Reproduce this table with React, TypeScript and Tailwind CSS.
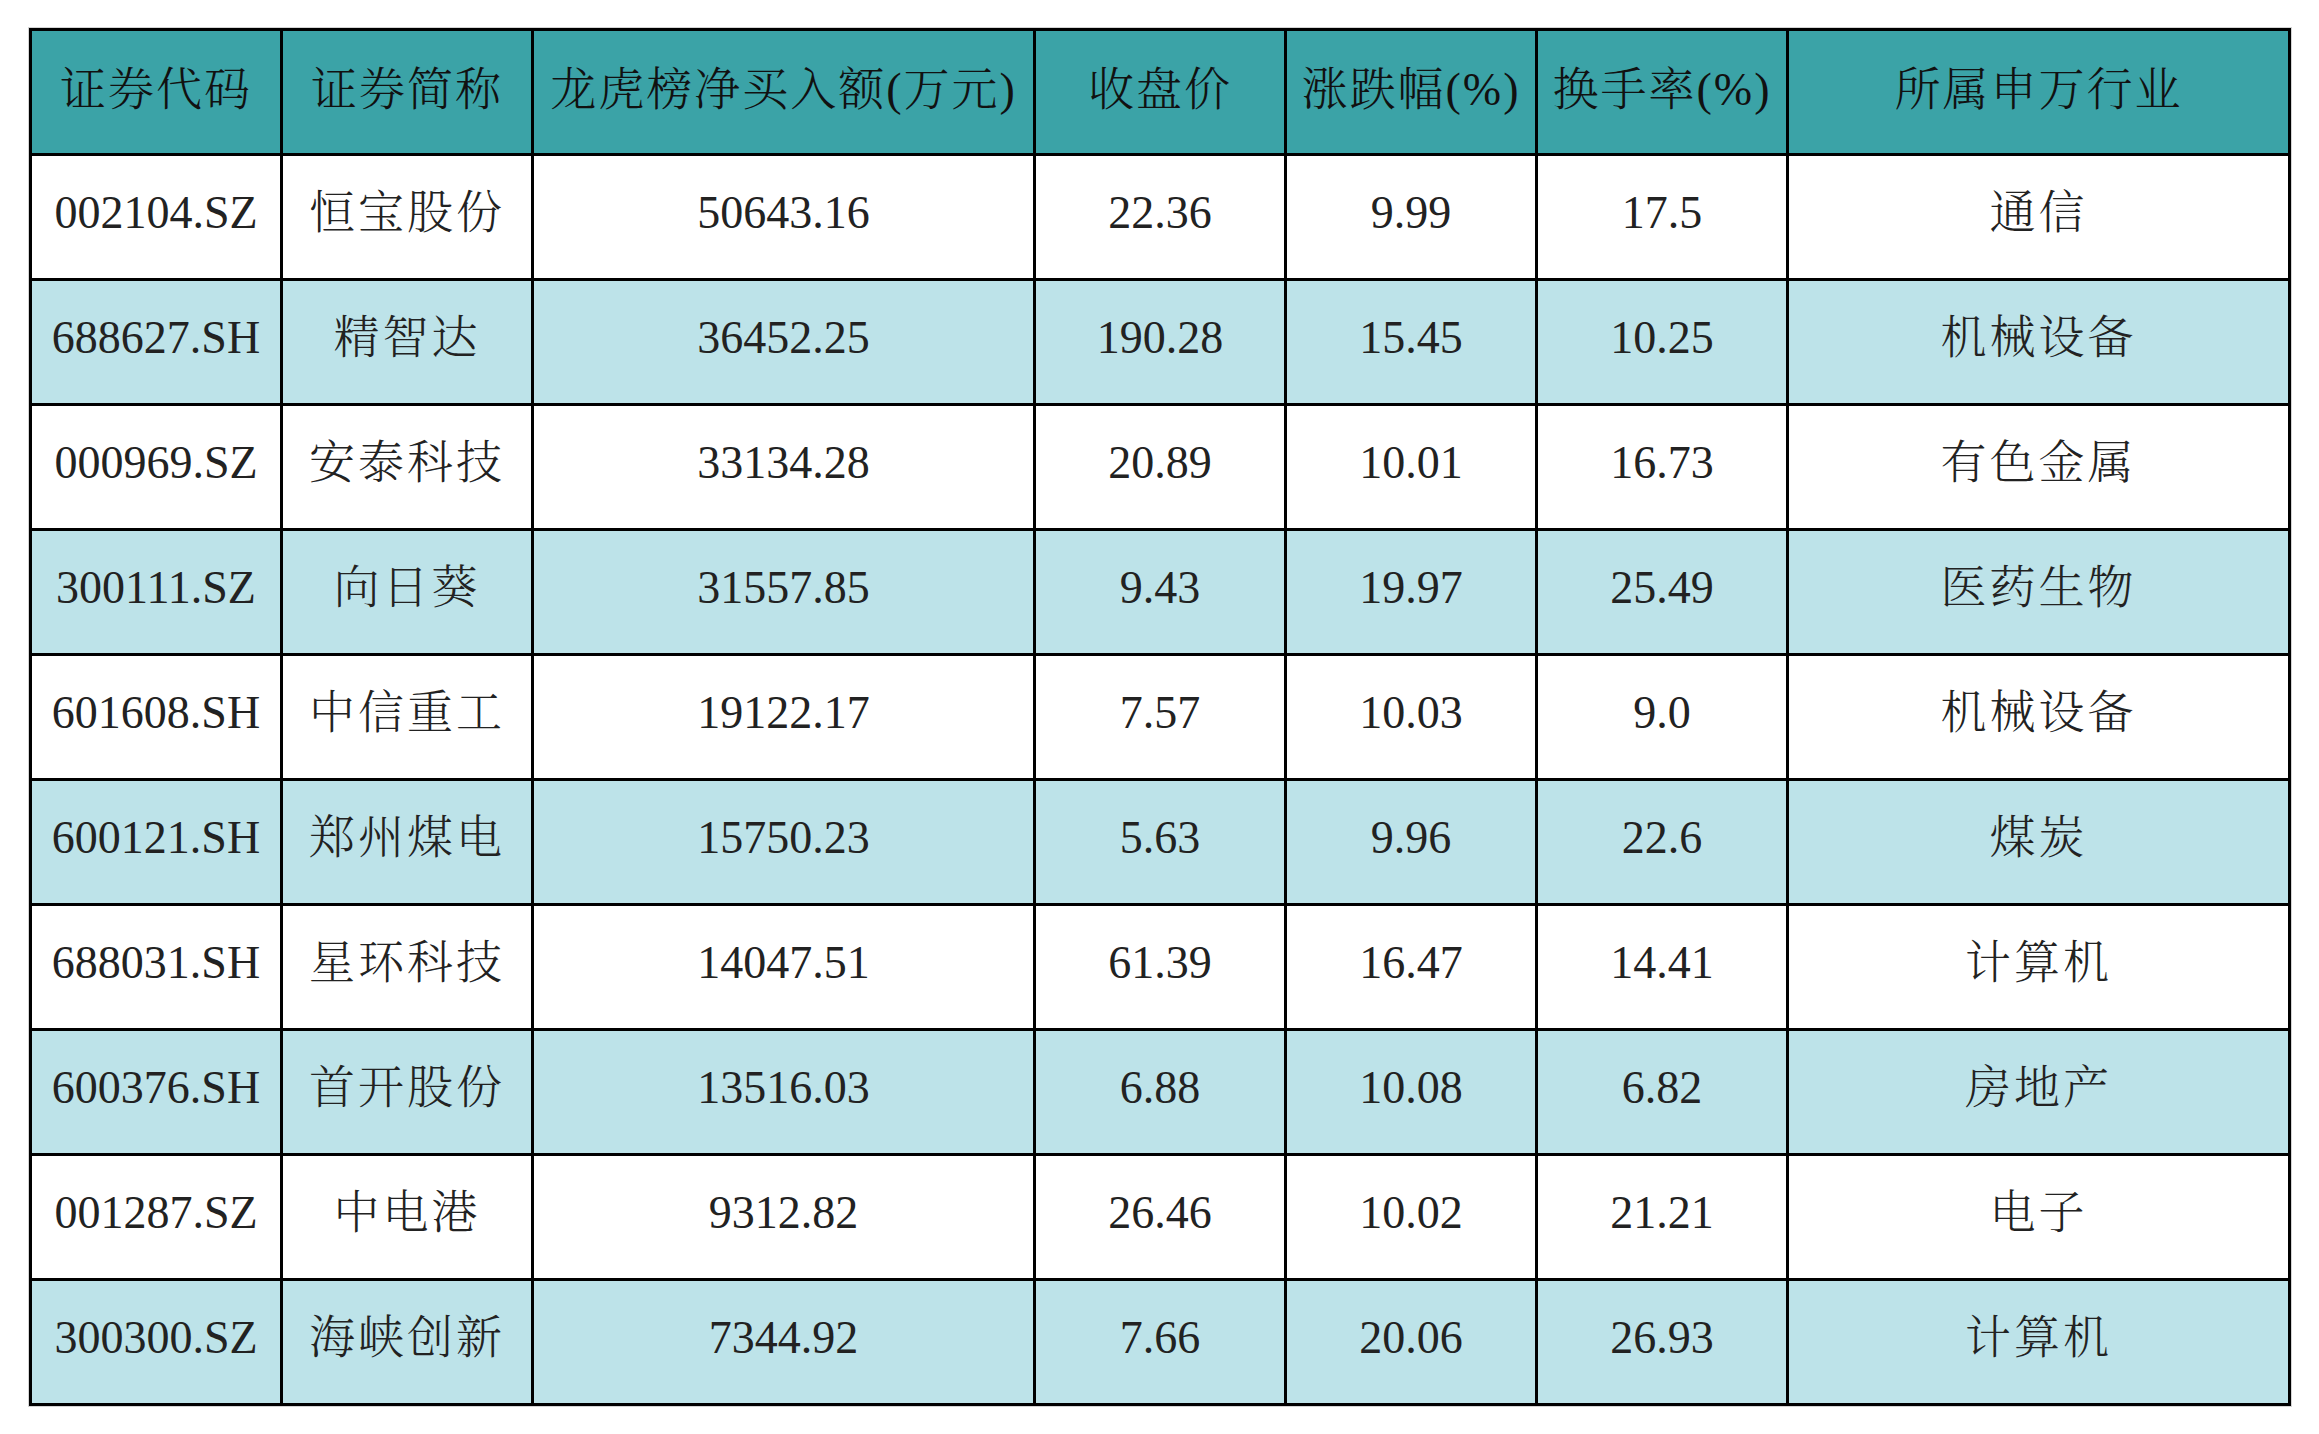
import React from "react";

const headers = ["证券代码", "证券简称", "龙虎榜净买入额(万元)", "收盘价", "涨跌幅(%)", "换手率(%)", "所属申万行业"];

const rows: string[][] = [
  ["002104.SZ", "恒宝股份", "50643.16", "22.36", "9.99", "17.5", "通信"],
  ["688627.SH", "精智达", "36452.25", "190.28", "15.45", "10.25", "机械设备"],
  ["000969.SZ", "安泰科技", "33134.28", "20.89", "10.01", "16.73", "有色金属"],
  ["300111.SZ", "向日葵", "31557.85", "9.43", "19.97", "25.49", "医药生物"],
  ["601608.SH", "中信重工", "19122.17", "7.57", "10.03", "9.0", "机械设备"],
  ["600121.SH", "郑州煤电", "15750.23", "5.63", "9.96", "22.6", "煤炭"],
  ["688031.SH", "星环科技", "14047.51", "61.39", "16.47", "14.41", "计算机"],
  ["600376.SH", "首开股份", "13516.03", "6.88", "10.08", "6.82", "房地产"],
  ["001287.SZ", "中电港", "9312.82", "26.46", "10.02", "21.21", "电子"],
  ["300300.SZ", "海峡创新", "7344.92", "7.66", "20.06", "26.93", "计算机"],
];

const fontStack =
  '"Liberation Serif", "AR PL UKai CN", "Noto Serif CJK SC", "Noto Sans CJK SC", serif';

export default function App() {
  return (
    <div className="min-h-screen w-[2319px] bg-white pl-[29px] pt-[28px]" style={{ fontFamily: fontStack }}>
      <div className="grid w-[2262px] grid-cols-[251px_251px_502px_251px_251px_251px_502px] border-l-[3px] border-t-[3px] border-black shadow-[0_0_0_1px_#d4d4d4]">
        {headers.map((h, i) => (
          <div
            key={"h" + i}
            className="flex h-[125px] items-center justify-center border-b-[3px] border-r-[3px] border-black bg-[#3ba3a7] pb-[6px] text-[46px] font-light tracking-[2px] text-[#111111] whitespace-nowrap"
          >
            {h}
          </div>
        ))}
        {rows.map((r, ri) =>
          r.map((c, ci) => (
            <div
              key={ri + "-" + ci}
              className={
                "flex h-[125px] items-center justify-center border-b-[3px] border-r-[3px] border-black pb-[10px] text-[46px] font-light text-[#222222] whitespace-nowrap " +
                (ci === 1 || ci === 6 ? "tracking-[3px] " : "") +
                (ri % 2 === 1 ? "bg-[#bde3e9]" : "bg-white")
              }
            >
              {c}
            </div>
          ))
        )}
      </div>
    </div>
  );
}
